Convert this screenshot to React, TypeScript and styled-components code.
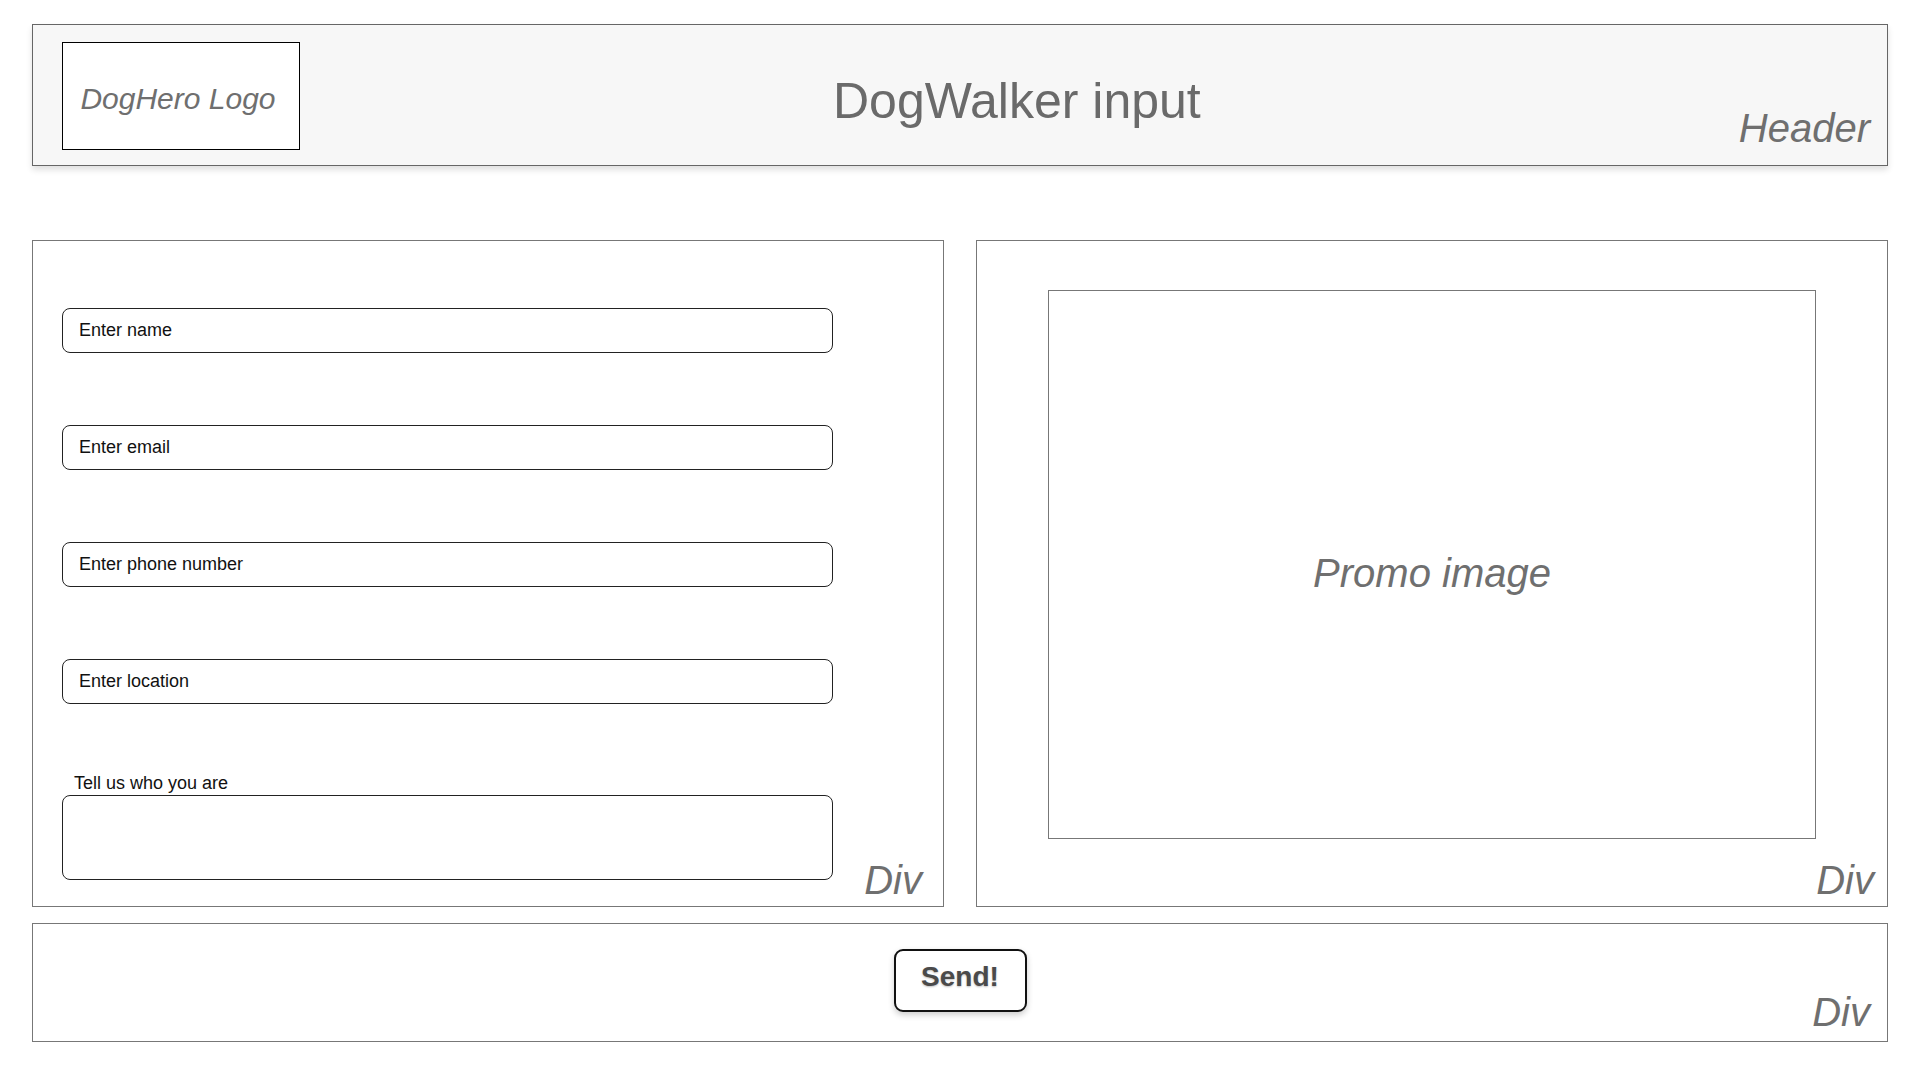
import React from "react";
import styled, { createGlobalStyle } from "styled-components";

const Global = createGlobalStyle`
  html, body { margin: 0; padding: 0; background: #ffffff; }
  body { font-family: "Liberation Sans", Arial, sans-serif; }
  * { box-sizing: border-box; }
`;

const Page = styled.div`
  width: 1920px;
  height: 1080px;
  padding: 24px 32px 0 32px;
  display: flex;
  flex-direction: column;
`;

const Header = styled.header`
  position: relative;
  height: 142px;
  background: #f7f7f7;
  border: 1px solid #666666;
  box-shadow: 0 4px 6px rgba(0, 0, 0, 0.12);
  display: flex;
  align-items: flex-start;
  padding: 17px 0 0 29px;
`;

const LogoBox = styled.div`
  width: 238px;
  height: 108px;
  background: #ffffff;
  border: 1px solid #000000;
  display: flex;
  align-items: center;
  justify-content: center;
  font-style: italic;
  font-size: 30px;
  color: #6f6f6f;
  padding: 5px 6px 0 0;
`;

const Title = styled.h1`
  margin: 0 0 0 533px;
  padding-top: 34px;
  font-size: 50px;
  font-weight: normal;
  line-height: 1;
  color: #6a6a6a;
`;

const CornerLabel = styled.span<{ $right: number; $bottom: number }>`
  position: absolute;
  right: ${(p) => p.$right}px;
  bottom: ${(p) => p.$bottom}px;
  font-style: italic;
  font-size: 40px;
  line-height: 1;
  color: #6f6f6f;
`;

const Panels = styled.div`
  margin-top: 74px;
  display: grid;
  grid-template-columns: 912px 912px;
  gap: 32px;
  height: 667px;
`;

const Panel = styled.section`
  position: relative;
  border: 1px solid #777777;
  background: #ffffff;
`;

const FormPanel = styled(Panel)`
  display: flex;
  flex-direction: column;
  padding: 67px 0 0 29px;
`;

const Field = styled.input`
  width: 771px;
  height: 45px;
  border: 1px solid #222222;
  border-radius: 8px;
  padding: 0 0 0 16px;
  font-family: "Liberation Sans", Arial, sans-serif;
  font-size: 18px;
  background: #ffffff;
  margin-bottom: 72px;
  outline: none;
  &::placeholder { color: #111111; }
`;

const AreaLabel = styled.label`
  font-size: 18px;
  color: #111111;
  margin: -3px 0 2px 12px;
  line-height: 20px;
`;

const Area = styled.textarea`
  width: 771px;
  height: 85px;
  border: 1px solid #222222;
  border-radius: 8px;
  resize: none;
  background: #ffffff;
  outline: none;
`;

const PromoPanel = styled(Panel)`
  padding: 49px 71px 0 71px;
`;

const PromoBox = styled.div`
  height: 549px;
  border: 1px solid #777777;
  display: flex;
  align-items: center;
  justify-content: center;
  font-style: italic;
  font-size: 40px;
  color: #6f6f6f;
  padding-top: 18px;
`;

const Footer = styled.div`
  position: relative;
  margin-top: 16px;
  height: 119px;
  border: 1px solid #777777;
  display: flex;
  justify-content: center;
  padding-top: 25px;
`;

const SendButton = styled.button`
  width: 133px;
  height: 63px;
  border: 2px solid #111111;
  border-radius: 9px;
  background: #ffffff;
  box-shadow: 0 3px 6px rgba(0, 0, 0, 0.2);
  font-family: "Liberation Sans", Arial, sans-serif;
  font-weight: bold;
  font-size: 28px;
  color: #4a4a4a;
  text-shadow: 0 1px 2px rgba(0, 0, 0, 0.25);
  padding: 0 0 8px 0;
  cursor: pointer;
`;

export default function App() {
  return (
    <>
      <Global />
      <Page>
        <Header>
          <LogoBox>DogHero Logo</LogoBox>
          <Title>DogWalker input</Title>
          <CornerLabel $right={17} $bottom={17}>Header</CornerLabel>
        </Header>
        <Panels>
          <FormPanel>
            <Field placeholder="Enter name" />
            <Field placeholder="Enter email" />
            <Field placeholder="Enter phone number" />
            <Field placeholder="Enter location" />
            <AreaLabel>Tell us who you are</AreaLabel>
            <Area />
            <CornerLabel $right={21} $bottom={6}>Div</CornerLabel>
          </FormPanel>
          <PromoPanel>
            <PromoBox>Promo image</PromoBox>
            <CornerLabel $right={13} $bottom={6}>Div</CornerLabel>
          </PromoPanel>
        </Panels>
        <Footer>
          <SendButton>Send!</SendButton>
          <CornerLabel $right={17} $bottom={9}>Div</CornerLabel>
        </Footer>
      </Page>
    </>
  );
}
